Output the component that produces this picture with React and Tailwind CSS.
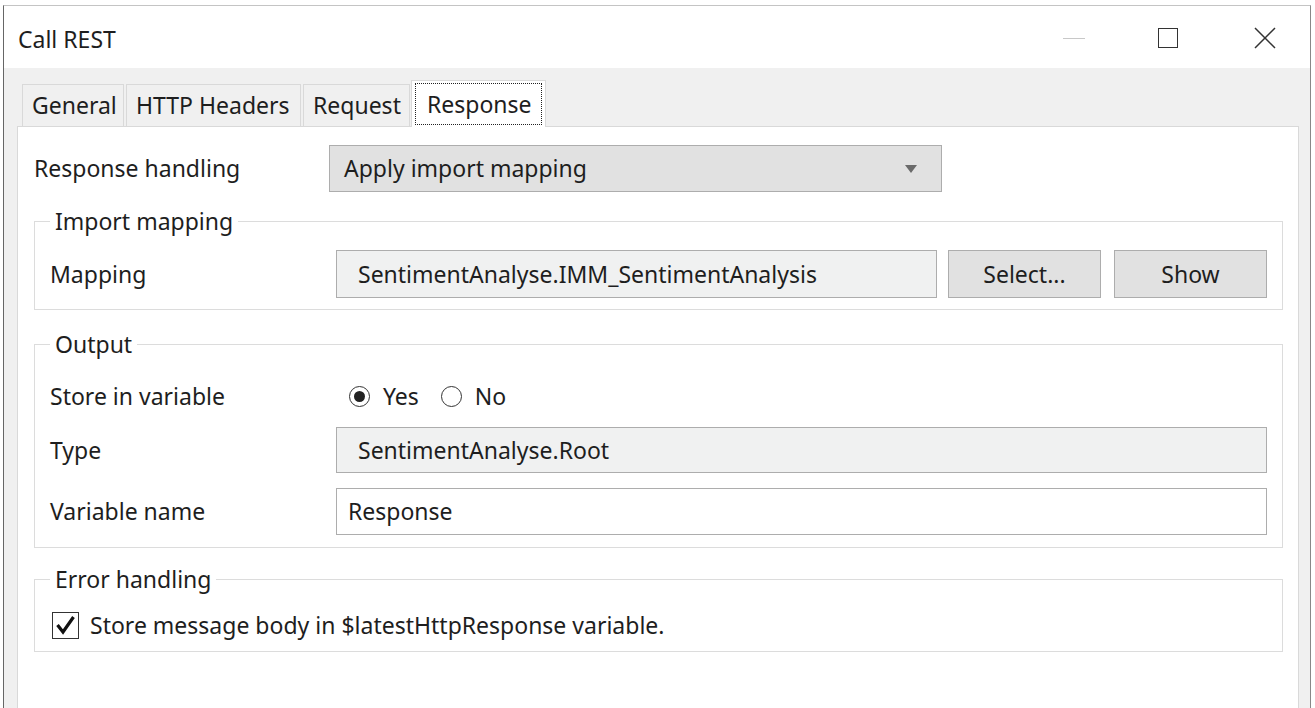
import React from 'react';

const font = { fontFamily: '"Noto Sans", "Open Sans", sans-serif' };

const Tab = ({ label, width, active }) =>
  active ? (
    <div className={`${width} h-[47px] -mb-px -ml-px bg-white border border-b-0 border-[#d9d9d9] relative z-10 flex pt-[2px] pb-[2px] px-[3px]`}>
      <span className="flex-1 border border-dotted border-[#222] pl-[11px] flex items-center">{label}</span>
    </div>
  ) : (
    <div className={`${width} h-[42px] bg-[#f0f0f0] border border-b-0 border-[#d9d9d9] flex items-center pl-[9px]`}>
      {label}
    </div>
  );

const Group = ({ title, children, className = '' }) => (
  <fieldset className={`border border-[#dcdcdc] px-[15px] mr-[15px] ${className}`}>
    <legend className="px-[5px] leading-[28px]">{title}</legend>
    {children}
  </fieldset>
);

const Radio = ({ checked }) => (
  <span className="w-[21px] h-[21px] rounded-full border-[1.5px] border-[#333] flex items-center justify-center bg-white">
    {checked && <span className="w-[11px] h-[11px] rounded-full bg-[#222]" />}
  </span>
);

export default function App() {
  return (
    <div className="w-[1315px] h-[708px] bg-white pl-[3px] pr-[4px] pt-[5px] overflow-hidden text-[23px] text-[#1e1e1e]" style={font}>
      <div className="h-[720px] border-l-[1.5px] border-r-[1.5px] border-t border-l-[#666] border-r-[#888] border-t-[#c4c4c4] flex flex-col">
        {/* Title bar */}
        <div className="h-[62px] bg-white flex items-center pl-[14px] shrink-0">
          <span className="flex-1 pt-[4px]">Call REST</span>
          <div className="flex items-center pt-[2px]">
            <span className="w-[22px] h-px bg-[#c8c8c8] mr-[73px]" />
            <span className="w-[20px] h-[20px] border-[1.5px] border-[#333] mr-[76px]" />
            <svg width="22" height="22" viewBox="0 0 22 22" className="mr-[34px]">
              <path d="M1 1 L21 21 M21 1 L1 21" stroke="#333" strokeWidth="1.5" fill="none" />
            </svg>
          </div>
        </div>

        {/* Body */}
        <div className="flex-1 bg-[#f0f0f0] pl-[13px] pr-[11px] pt-[12px] flex flex-col">
          <div className="flex items-end pl-[5px] gap-[2px]">
            <Tab label="General" width="w-[102px]" />
            <Tab label="HTTP Headers" width="w-[175px]" />
            <Tab label="Request" width="w-[107px]" />
            <Tab label="Response" width="w-[135px]" active />
          </div>

          <div className="flex-1 bg-white border border-[#d9d9d9] pl-[16px] pt-[18px]">
            {/* Response handling */}
            <div className="flex items-center h-[47px]">
              <span className="w-[295px]">Response handling</span>
              <div className="w-[613px] h-[47px] bg-[#e1e1e1] border border-[#adadad] flex items-center pl-[14px] pr-[24px]">
                <span className="flex-1">Apply import mapping</span>
                <svg width="12" height="8" viewBox="0 0 12 8">
                  <path d="M0 0 H12 L6 8 Z" fill="#6a6a6a" />
                </svg>
              </div>
            </div>

            {/* Import mapping */}
            <Group title="Import mapping" className="mt-[15px] pb-[11px]">
              <div className="flex items-center h-[48px] mt-[15px]">
                <span className="w-[286px]">Mapping</span>
                <div className="w-[601px] h-[48px] bg-[#f0f1f1] border border-[#adadad] flex items-center pl-[21px]">
                  SentimentAnalyse.IMM_SentimentAnalysis
                </div>
                <button className="ml-[11px] w-[153px] h-[48px] bg-[#e1e1e1] border border-[#adadad] flex items-center justify-center">
                  Select...
                </button>
                <button className="ml-[13px] w-[153px] h-[48px] bg-[#e1e1e1] border border-[#adadad] flex items-center justify-center">
                  Show
                </button>
              </div>
            </Group>

            {/* Output */}
            <Group title="Output" className="mt-[20px] pb-[12px]">
              <div className="flex items-center h-[46px] mt-[15px]">
                <span className="w-[299px]">Store in variable</span>
                <div className="flex items-center">
                  <Radio checked />
                  <span className="ml-[13px]">Yes</span>
                  <span className="ml-[22px]"><Radio /></span>
                  <span className="ml-[13px]">No</span>
                </div>
              </div>
              <div className="flex items-center h-[46px] mt-[8px]">
                <span className="w-[286px]">Type</span>
                <div className="flex-1 h-[46px] bg-[#f0f1f1] border border-[#adadad] flex items-center pl-[21px]">
                  SentimentAnalyse.Root
                </div>
              </div>
              <div className="flex items-center h-[47px] mt-[15px]">
                <span className="w-[286px]">Variable name</span>
                <div className="flex-1 h-[47px] bg-white border border-[#adadad] flex items-center pl-[11px]">
                  Response
                </div>
              </div>
            </Group>

            {/* Error handling */}
            <Group title="Error handling" className="mt-[17px] pb-[12px]">
              <div className="flex items-center h-[28px] mt-[18px]">
                <span className="ml-[2px] w-[27px] h-[27px] border-[1.5px] border-[#333] bg-white flex items-center justify-center">
                  <svg width="21" height="20" viewBox="0 0 21 20">
                    <path d="M2.5 10 L8 17 L18.5 2" stroke="#111" strokeWidth="3.2" fill="none" />
                  </svg>
                </span>
                <span className="ml-[11px]">Store message body in $latestHttpResponse variable.</span>
              </div>
            </Group>
          </div>
        </div>
      </div>
    </div>
  );
}
